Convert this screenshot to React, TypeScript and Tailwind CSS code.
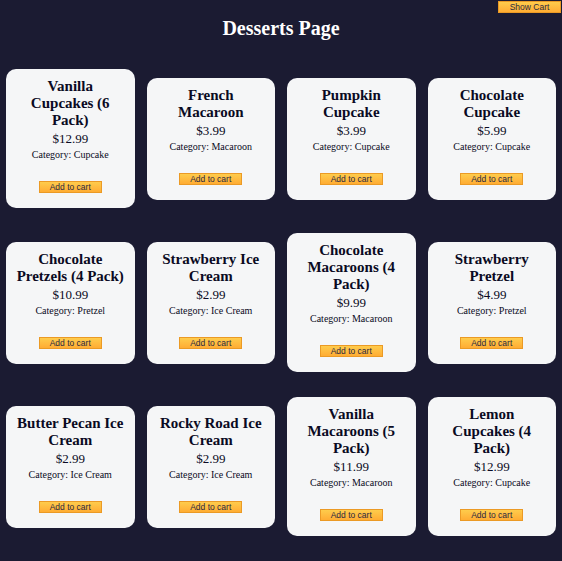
import React from "react";

const desserts = [
  { name: "Vanilla Cupcakes (6 Pack)", price: "$12.99", category: "Cupcake" },
  { name: "French Macaroon", price: "$3.99", category: "Macaroon" },
  { name: "Pumpkin Cupcake", price: "$3.99", category: "Cupcake" },
  { name: "Chocolate Cupcake", price: "$5.99", category: "Cupcake" },
  { name: "Chocolate Pretzels (4 Pack)", price: "$10.99", category: "Pretzel" },
  { name: "Strawberry Ice Cream", price: "$2.99", category: "Ice Cream" },
  { name: "Chocolate Macaroons (4 Pack)", price: "$9.99", category: "Macaroon" },
  { name: "Strawberry Pretzel", price: "$4.99", category: "Pretzel" },
  { name: "Butter Pecan Ice Cream", price: "$2.99", category: "Ice Cream" },
  { name: "Rocky Road Ice Cream", price: "$2.99", category: "Ice Cream" },
  { name: "Vanilla Macaroons (5 Pack)", price: "$11.99", category: "Macaroon" },
  { name: "Lemon Cupcakes (4 Pack)", price: "$12.99", category: "Cupcake" },
];

const btn =
  "bg-gradient-to-b from-[#fecc4c] to-[#ffac33] border border-[#eb9a25] text-[#2a2a40] text-[8.5px] leading-[10px] px-[10px] font-['Liberation_Sans',Arial,sans-serif] cursor-pointer";

export default function App() {
  return (
    <div className="relative min-h-screen bg-[#1b1b32] font-['Liberation_Serif','Times_New_Roman',serif] pb-[25px]">
      <button className={`${btn} absolute top-[1px] right-[1px] w-[63px] h-[12px] px-0`}>Show Cart</button>
      <h1 className="pt-[17px] text-center text-white font-bold text-[20px] leading-[23px]">Desserts Page</h1>
      <div className="mt-[29px] grid grid-cols-4 gap-x-[12px] gap-y-[25px] items-center px-[6px]">
        {desserts.map((d) => (
          <div
            key={d.name}
            className="bg-[#f5f6f7] rounded-[10px] px-[10px] pt-[9px] pb-[15px] flex flex-col items-center text-center text-[#0a0a23]"
          >
            <h2 className="font-bold text-[15px] leading-[17px]">{d.name}</h2>
            <p className="mt-[2px] text-[13px] leading-[15px]">{d.price}</p>
            <p className="mt-[3px] text-[10px] leading-[12px]">Category: {d.category}</p>
            <button className={`${btn} mt-[20px] h-[12px]`}>Add to cart</button>
          </div>
        ))}
      </div>
    </div>
  );
}
